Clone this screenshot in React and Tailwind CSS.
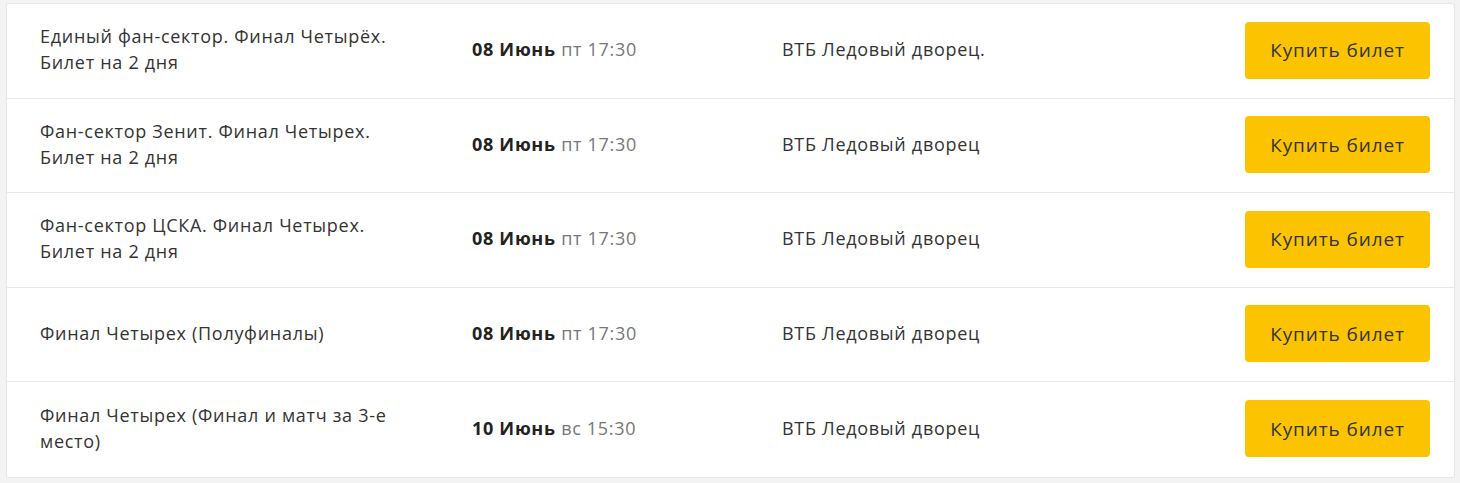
import React from 'react';

const events = [
  { title: 'Единый фан-сектор. Финал Четырёх. Билет на 2 дня', day: '08 Июнь', time: 'пт 17:30', place: 'ВТБ Ледовый дворец.' },
  { title: 'Фан-сектор Зенит. Финал Четырех. Билет на 2 дня', day: '08 Июнь', time: 'пт 17:30', place: 'ВТБ Ледовый дворец' },
  { title: 'Фан-сектор ЦСКА. Финал Четырех. Билет на 2 дня', day: '08 Июнь', time: 'пт 17:30', place: 'ВТБ Ледовый дворец' },
  { title: 'Финал Четырех (Полуфиналы)', day: '08 Июнь', time: 'пт 17:30', place: 'ВТБ Ледовый дворец' },
  { title: 'Финал Четырех (Финал и матч за 3-е место)', day: '10 Июнь', time: 'вс 15:30', place: 'ВТБ Ледовый дворец' },
];

const App = () => {
  return (
    <div className="min-h-[483px] bg-[#f3f3f3] pt-[3px] pl-[6px] pr-[5px]" style={{ fontFamily: '"Open Sans", "Noto Sans", sans-serif' }}>
      <div className="bg-white border border-[#e6e6e6] rounded-[3px]">
        {events.map((ev, i) => (
          <div
            key={i}
            className={`grid grid-cols-[432px_310px_1fr_auto] items-center h-[94.5px] pl-[33px] pr-[24px] tracking-[0.7px] ${i < events.length - 1 ? 'border-b border-[#e8e8e8]' : ''}`}
          >
            <div className="text-[18px] leading-[26px] text-[#333] pr-[62px] -mt-[3px]">{ev.title}</div>
            <div className="text-[18px] text-[#777] -mt-[2px]">
              <span className="font-bold text-[#222]">{ev.day}</span> {ev.time}
            </div>
            <div className="text-[18px] text-[#333] -mt-[2px]">{ev.place}</div>
            <button className="w-[185px] h-[57px] rounded-[4px] bg-[#fcc400] text-[19px] text-[#333] tracking-[0.9px] -mt-[1px]">Купить билет</button>
          </div>
        ))}
      </div>
    </div>
  );
};

export default App;
